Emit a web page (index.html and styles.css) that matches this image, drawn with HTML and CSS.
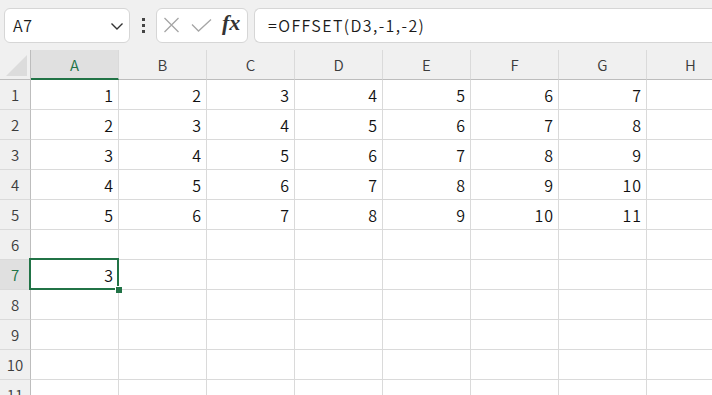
FILE: index.html
```html
<!DOCTYPE html>
<html lang="ja">
<head>
    <meta charset="UTF-8">
    <title>OFFSET</title>
    <link rel="stylesheet" href="styles.css">
</head>
<body>
    <div class="formula-bar">
        <div class="name-box">
            <span>A7</span>
            <svg class="chevron" width="14" height="9" viewBox="0 0 14 9"><path d="M1.5 1.5 L7 7 L12.5 1.5" fill="none" stroke="#333" stroke-width="1.4"/></svg>
        </div>
        <div class="kebab"><i></i><i></i><i></i></div>
        <div class="fx-box">
            <svg width="17" height="16" viewBox="0 0 17 16"><path d="M1.5 1 L15.5 15 M15.5 1 L1.5 15" stroke="#a6a6a6" stroke-width="1.3" fill="none"/></svg>
            <svg width="21" height="13" viewBox="0 0 21 13"><path d="M1 5.5 L7.5 12 L20 0.5" stroke="#a6a6a6" stroke-width="1.3" fill="none"/></svg>
            <span class="fx">fx</span>
        </div>
        <div class="formula-input">=OFFSET(D3,-1,-2)</div>
    </div>

    <div class="sheet">
        <div class="corner"><span class="tri"></span></div>
        <div class="col-head active">A</div>
        <div class="col-head">B</div>
        <div class="col-head">C</div>
        <div class="col-head">D</div>
        <div class="col-head">E</div>
        <div class="col-head">F</div>
        <div class="col-head">G</div>
        <div class="col-head">H</div>
    </div>

    <script>
        const sheet = document.querySelector('.sheet');
        for (let r = 1; r <= 11; r++) {
            const head = document.createElement('div');
            head.className = 'row-head' + (r === 7 ? ' active' : '');
            head.textContent = r;
            sheet.appendChild(head);
            for (let c = 0; c < 8; c++) {
                const cell = document.createElement('div');
                cell.className = 'cell';
                if (r <= 5 && c < 7) {
                    cell.textContent = r + c;
                }
                if (r === 7 && c === 0) {
                    cell.textContent = 3;
                    cell.classList.add('selected');
                }
                sheet.appendChild(cell);
            }
        }
    </script>
</body>
</html>
```

FILE: styles.css
```css
body {
    margin: 0;
    width: 712px;
    height: 395px;
    overflow: hidden;
    background-color: #ffffff;
    font-family: "Noto Sans CJK JP", "Liberation Sans", sans-serif;
    color: #222;
}
.formula-bar {
    display: flex;
    align-items: center;
    height: 50px;
    padding-left: 4px;
    background-color: #f0f0f0;
    box-sizing: border-box;
}
.name-box {
    width: 126px;
    height: 35px;
    box-sizing: border-box;
    background: #fff;
    border: 1px solid #d6d6d6;
    border-radius: 6px;
    display: flex;
    align-items: center;
    justify-content: space-between;
    padding: 0 5px 0 8px;
    font-size: 16px;
    font-weight: 350;
    letter-spacing: 0.5px;
    color: #1a1a1a;
}
.chevron {
    margin-top: 2px;
}
.kebab {
    width: 26px;
    display: flex;
    flex-direction: column;
    align-items: center;
    gap: 3px;
}
.kebab i {
    display: block;
    width: 3px;
    height: 3px;
    background: #444;
}
.fx-box {
    width: 92px;
    height: 35px;
    box-sizing: border-box;
    background: #fff;
    border: 1px solid #d6d6d6;
    border-radius: 6px;
    display: flex;
    align-items: center;
    gap: 11px;
    padding-left: 6px;
}
.fx {
    font-family: "Liberation Serif", serif;
    font-style: italic;
    font-weight: bold;
    font-size: 22px;
    color: #333;
    margin-left: -1px;
    margin-top: -4px;
}
.formula-input {
    flex: 1;
    height: 35px;
    box-sizing: border-box;
    margin-left: 6px;
    background: #fff;
    border: 1px solid #d6d6d6;
    border-right: none;
    border-radius: 6px 0 0 6px;
    display: flex;
    align-items: center;
    padding-left: 13px;
    font-size: 16px;
    font-weight: 350;
    color: #1a1a1a;
    letter-spacing: 1.4px;
}
.sheet {
    display: grid;
    grid-template-columns: 31px repeat(8, 88px);
    grid-template-rows: 30px;
    grid-auto-rows: 30px;
    width: 735px;
}
.corner {
    background: #f0f0f0;
    border-right: 1px solid #bdbdbd;
    border-bottom: 1px solid #bdbdbd;
    position: relative;
}
.tri {
    position: absolute;
    right: 3px;
    bottom: 3px;
    width: 0;
    height: 0;
    border-left: 21px solid transparent;
    border-bottom: 21px solid #dcdcdc;
}
.col-head {
    background: #f0f0f0;
    border-right: 1px solid #dadada;
    border-bottom: 1px solid #bdbdbd;
    display: flex;
    align-items: center;
    justify-content: center;
    font-size: 15px;
    font-weight: 350;
    color: #3c3c3c;
}
.col-head.active {
    background: #e0e0e0;
    color: #217346;
    border-bottom: 2px solid #217346;
}
.row-head {
    background: #f0f0f0;
    border-right: 1px solid #bdbdbd;
    border-bottom: 1px solid #dadada;
    display: flex;
    align-items: center;
    justify-content: center;
    font-size: 15px;
    font-weight: 350;
    color: #3c3c3c;
}
.row-head.active {
    background: #e0e0e0;
    color: #217346;
}
.cell {
    border-right: 1px solid #dadada;
    border-bottom: 1px solid #dadada;
    display: flex;
    align-items: center;
    justify-content: flex-end;
    padding-right: 4px;
    font-size: 16px;
    font-weight: 350;
    letter-spacing: 1px;
    color: #111;
    position: relative;
}
.cell.selected::after {
    content: "";
    position: absolute;
    left: -2px;
    top: -2px;
    right: -1px;
    bottom: -1px;
    border: 2px solid #217346;
}
.cell.selected::before {
    content: "";
    position: absolute;
    right: -4px;
    bottom: -4px;
    width: 6px;
    height: 6px;
    background: #217346;
    border-top: 1px solid #fff;
    border-left: 1px solid #fff;
    z-index: 1;
}
```
